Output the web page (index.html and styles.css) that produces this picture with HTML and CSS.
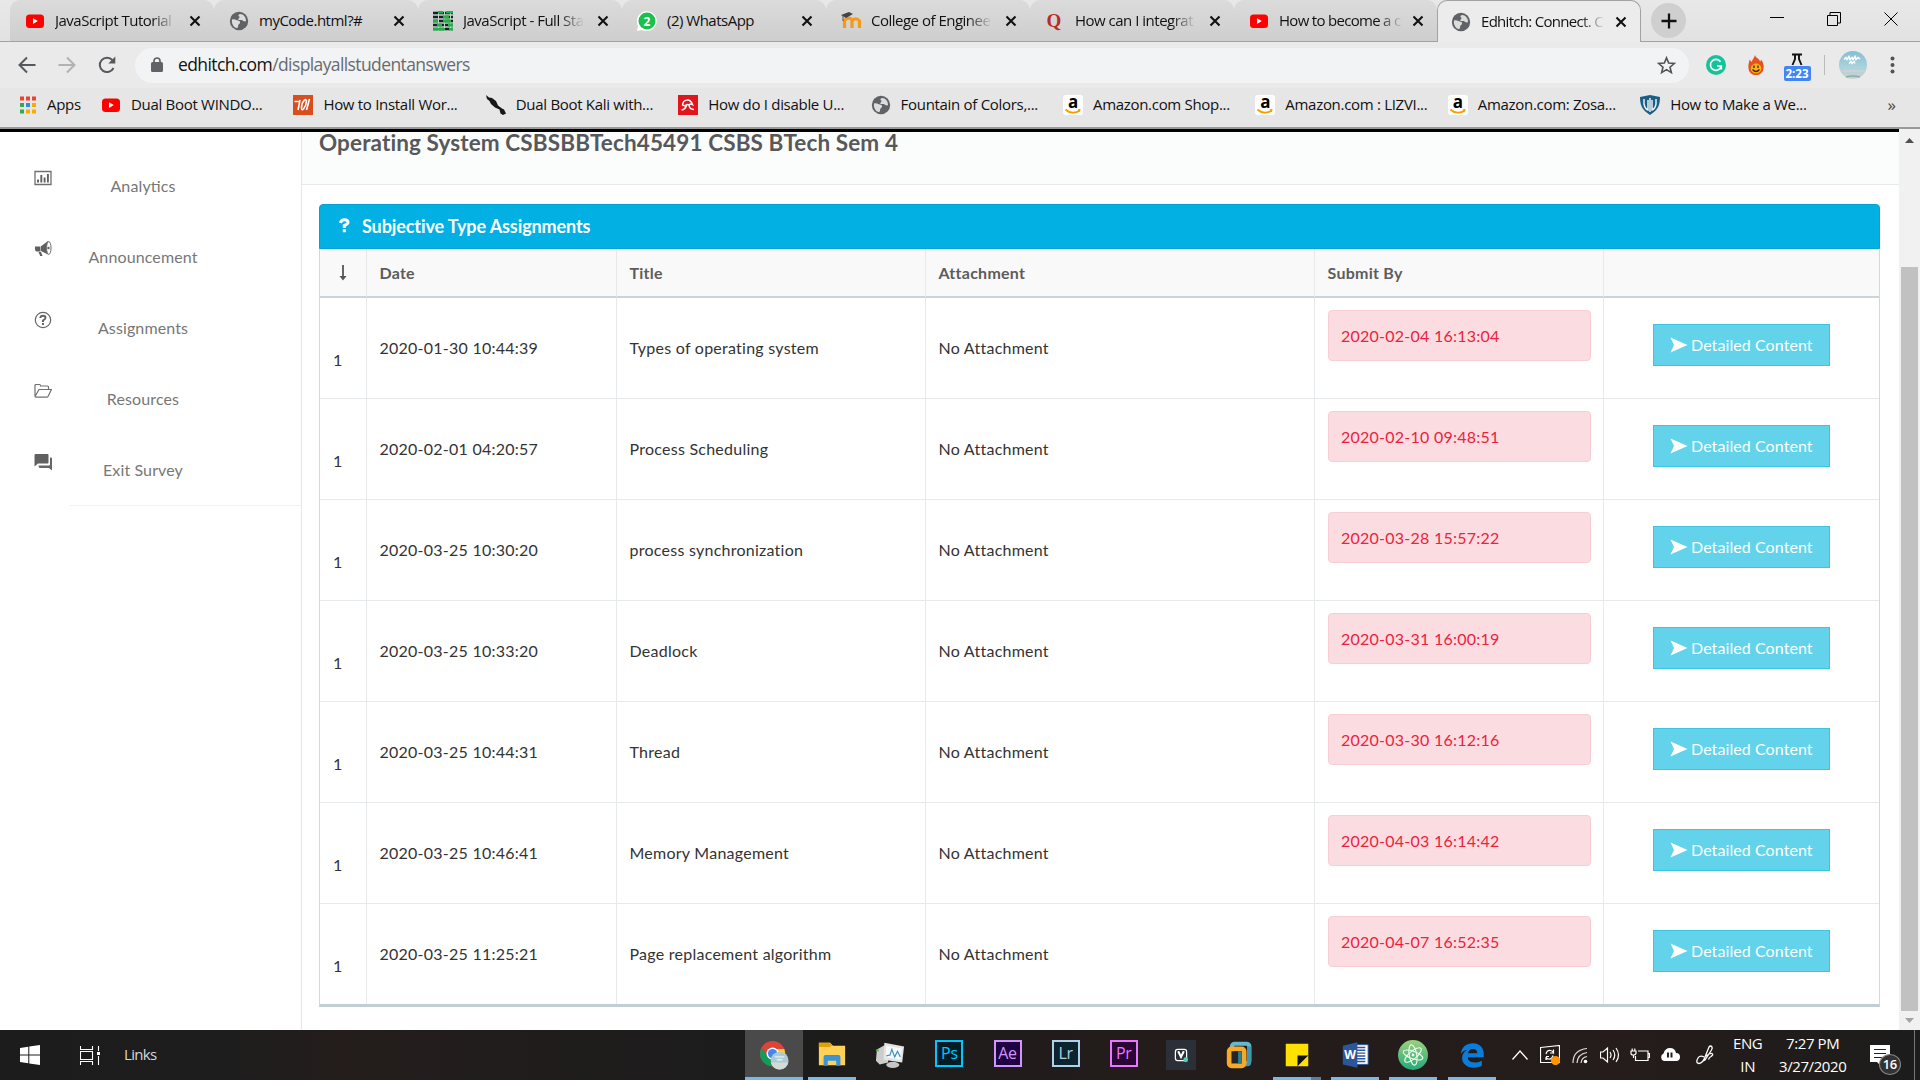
FILE: index.html
```html
<!DOCTYPE html>
<html lang="en">
<head>
<meta charset="utf-8">
<title>Edhitch: Connect.</title>
<link rel="stylesheet" href="styles.css">
</head>
<body>
<svg class="defs" aria-hidden="true">
  <symbol id="globe" viewBox="0 0 20 20"><circle cx="10" cy="10" r="9.2" fill="#5f6368"/><path d="M3 8.500C5.500 7.500 7 9 9 9.500c2 .5 2.500 1.500 1.800 2.800-.8 1-1.800 1.200-1.700 2.700 0 1-.5 1.800-1 2.300C4.500 16.500 2.300 12.500 3 8.500zM11 3c-1.800.5-2 2-.8 2.500.8.500.3 1.500-.6 1.900-.8.600-.2 1.600.8 1.700 1.400.1 2.500-.2 3.500.6 1 .7 2 .8 3.100.6C17.300 6.500 14.500 3 11 3z" fill="#dcdcdc"/></symbol>
  <symbol id="youtube" viewBox="0 0 20 20"><rect x="1" y="3.500" width="18" height="13.500" rx="3.500" fill="#f00"/><path d="M8 7.300v5.600l4.800-2.800z" fill="#fff"/></symbol>
  <symbol id="smile" viewBox="0 0 20 8"><path d="M2.500 1.500c4 4 10.500 4 14 1" fill="none" stroke="#f90" stroke-width="1.800"/><path d="M14.500 1.300l3.200-.3-.8 3.200z" fill="#f90"/></symbol>
  <symbol id="close" viewBox="0 0 12 12"><path d="M1.500 1.500l9 9M10.500 1.500l-9 9" stroke="#111" stroke-width="2.100"/></symbol>
  <symbol id="send" viewBox="0 0 18 16"><path d="M.5.5L17.500 8 .5 15.500 4 8z" fill="#fff"/></symbol>
</svg>

<header class="chrome">
  <div class="tabs">
    <div class="tab"><svg class="fav"><use href="#youtube"/></svg><span class="tab-title">JavaScript Tutorial</span><svg class="x"><use href="#close"/></svg></div>
    <div class="tab"><svg class="fav"><use href="#globe"/></svg><span class="tab-title plain">myCode.html?#</span><svg class="x"><use href="#close"/></svg></div>
    <div class="tab"><svg class="fav" viewBox="0 0 20 20"><path d="M0 0h20v20H0z" fill="#c9d4cc"/><path d="M0 2h20M0 6h20M0 10h20M0 14h20M0 18h20" stroke="#17202b" stroke-width="2.400" stroke-dasharray="5 1"/><path d="M5 0h5v2.500H5zM13 0h7v2.500h-7zM10 4.500h6v3h-6zM0 8.500h5v3H0zM10 8.500h8v3h-8zM4 12.500h5v3H4zM15 12.500h5v3h-5zM0 17h12v2.500H0zM16 17h4v2.500h-4z" fill="#23b04a"/></svg><span class="tab-title">JavaScript - Full Sta</span><svg class="x"><use href="#close"/></svg></div>
    <div class="tab"><svg class="fav" viewBox="0 0 20 20"><path d="M0 20l1-5A10 10 0 1 1 5 19z" fill="#fff"/><circle cx="10" cy="10" r="8.500" fill="#19c04c"/><text x="10" y="14.500" text-anchor="middle" class="glyph-2">2</text></svg><span class="tab-title plain">(2) WhatsApp</span><svg class="x"><use href="#close"/></svg></div>
    <div class="tab"><svg class="fav" viewBox="0 0 20 20"><path d="M3.500 17V9.500Q7.500 5 11 9v8M11 10q4-4.500 7.500 0v7" fill="none" stroke="#f39a1d" stroke-width="3.200"/><path d="M0 4l8-3 4 2-7 4z" fill="#444"/><path d="M2 4v6" stroke="#555"/></svg><span class="tab-title">College of Enginee</span><svg class="x"><use href="#close"/></svg></div>
    <div class="tab"><svg class="fav" viewBox="0 0 20 20"><text x="9" y="16" text-anchor="middle" class="glyph-q">Q</text></svg><span class="tab-title">How can I integrat</span><svg class="x"><use href="#close"/></svg></div>
    <div class="tab last"><svg class="fav"><use href="#youtube"/></svg><span class="tab-title tight">How to become a c</span><svg class="x"><use href="#close"/></svg></div>
    <div class="tab active"><svg class="fav"><use href="#globe"/></svg><span class="tab-title tight">Edhitch: Connect. C</span><svg class="x"><use href="#close"/></svg></div>
    <div class="plus"><svg width="16" height="16" viewBox="0 0 16 16"><path d="M8 .5v15M.5 8h15" stroke="#111" stroke-width="2.300"/></svg></div>
    <div class="win">
      <svg width="14" height="14" viewBox="0 0 14 14"><path d="M0 5.500h14" stroke="#000"/></svg>
      <svg width="14" height="14" viewBox="0 0 14 14"><path d="M.5 3.500h10v10H.5zM3 3V.5h10.500V11H11" fill="none" stroke="#000"/></svg>
      <svg width="14" height="14" viewBox="0 0 14 14"><path d="M.5.5l13 13M13.500.5l-13 13" stroke="#000"/></svg>
    </div>
  </div>

  <div class="toolbar">
    <svg class="nav" viewBox="0 0 18 18"><path d="M17.500 9H2M9 1.500L1.500 9 9 16.500" fill="none" stroke="#55585c" stroke-width="2"/></svg>
    <svg class="nav" viewBox="0 0 18 18"><path d="M.5 9H16M9 1.500L16.500 9 9 16.500" fill="none" stroke="#b0b2b4" stroke-width="2"/></svg>
    <svg class="nav" viewBox="0 0 18 18"><path d="M15.500 12A7.200 7.200 0 1 1 14.500 4.200" fill="none" stroke="#55585c" stroke-width="2"/><path d="M17.300.5v7h-7z" fill="#55585c"/></svg>
    <div class="omnibox">
      <svg width="12" height="16" viewBox="0 0 12 16"><rect y="5" width="12" height="10" rx="1.500" fill="#5f6368"/><path d="M3 6V4a3 3 0 0 1 6 0v2" fill="none" stroke="#5f6368" stroke-width="1.700"/></svg>
      <span class="url"><b>edhitch.com</b>/displayallstudentanswers</span>
      <svg class="star" width="19" height="19" viewBox="0 0 20 20"><path d="M10 2l2.300 5.400 5.900.5-4.500 3.900 1.400 5.700L10 14.400l-5.100 3.100 1.400-5.700L1.800 7.900l5.900-.5z" fill="none" stroke="#505357" stroke-width="1.700"/></svg>
    </div>
    <svg class="ext" viewBox="0 0 20 20"><circle cx="10" cy="10" r="10" fill="#15c39a"/><path d="M14.500 6.800A5.500 5.500 0 1 0 15.300 11H11M15.300 11v3.500" fill="none" stroke="#fff" stroke-width="1.700"/></svg>
    <svg class="ext" viewBox="0 0 20 20"><path d="M9 0c1 3.500 4 3 5 6.500 1-.5 1-2 1-2 2.500 3 3 6 2.500 9A7.500 7 0 0 1 2.500 13C2 9 3.500 7 3.500 4.500c1 1 1.500 2 2 2.500C6.500 4 8 3.500 9 0z" fill="#e8501c"/><ellipse cx="10" cy="13.500" rx="5.300" ry="5" fill="#f8b01b"/><path d="M8 10.500V13M12 10.500V13M6.500 14.500q3.500 4 7 0" fill="none" stroke="#462300" stroke-width="1.300"/></svg>
    <div class="timer"><svg width="12" height="13" viewBox="0 0 12 13"><path d="M1 1.500h10M4 1v5L1.500 12M8 1v5l2.500 6" stroke="#111" stroke-width="1.900" fill="none"/></svg><b>2:23</b></div>
    <i class="vsep"></i>
    <svg class="avatar" viewBox="0 0 28 28"><defs><linearGradient id="sky" x2="0" y2="1"><stop stop-color="#85bed3"/><stop offset=".6" stop-color="#acd3dd"/><stop offset="1" stop-color="#d2cfc8"/></linearGradient></defs><circle cx="14" cy="14" r="14" fill="url(#sky)"/><path d="M5 8.500l2-2 1 2 2-3 1 3 2-2 1 2 2-3 1 3 2-2 2 1.500M10 12.500l2-2 1 2 2-2 1 2" fill="none" stroke="#fff" stroke-width="1.500"/><path d="M3 20h22" stroke="#d9d6cc"/><path d="M7 26q7-2 14 0" fill="none" stroke="#7fb0b8" stroke-width="1.500"/></svg>
    <svg class="dots" width="5" height="18" viewBox="0 0 5 18"><g fill="#505357"><circle cx="2.500" cy="2.500" r="2"/><circle cx="2.500" cy="9" r="2"/><circle cx="2.500" cy="15.500" r="2"/></g></svg>
  </div>

  <nav class="bookmarks">
    <a class="apps"><svg class="fav" viewBox="0 0 20 20"><path d="M2 1.500h4v4H2zM8 1.500h4v4H8zM14 1.500h4v4h-4z" fill="#ea4335"/><path d="M2 8h4v4H2zM2 14.500h4v4H2z" fill="#34a853"/><path d="M8 8h4v4H8z" fill="#2b8cf0"/><path d="M14 8h4v4h-4zM8 14.500h4v4H8zM14 14.500h4v4h-4z" fill="#f9ab00"/></svg><span>Apps</span></a>
    <a><svg class="fav"><use href="#youtube"/></svg><span>Dual Boot WINDO...</span></a>
    <a><svg class="fav" viewBox="0 0 20 20"><path d="M0 0h20v20H0z" fill="#d84e1f"/><path d="M7 5L5 15M1.500 6.500H6M16.500 4l-3 11M11.500 5q-3 3-3 8 0 3 2 1 3-4 3-8-.5-2-2-1" fill="none" stroke="#fff" stroke-width="1.600"/></svg><span>How to Install Wor...</span></a>
    <a><svg class="fav" viewBox="0 0 20 20"><path d="M0 0l3 2.500 3 .5 4 3 2 4.500 4 3 2 1 2 4-3 1.500-2.500-1.500-1-4L9 12.500 5 9 3.500 6 1 4z" fill="#171717"/></svg><span>Dual Boot Kali with...</span></a>
    <a><svg class="fav" viewBox="0 0 20 20"><path d="M0 0h20v20H0z" fill="#e2151c"/><path d="M4.500 10.500C5 4 12 3 14.500 9.500q-2-1-3.500.5-2-1.500-4 1-1.300-1-2.500-.5M11 10q.5 4.500 5 4.500M9 9.500q-1.500 5-5.500 5.500" fill="none" stroke="#fff" stroke-width="1.500"/></svg><span>How do I disable U...</span></a>
    <a><svg class="fav"><use href="#globe"/></svg><span>Fountain of Colors,...</span></a>
    <a><span class="amazon">a<svg><use href="#smile"/></svg></span><span>Amazon.com Shop...</span></a>
    <a><span class="amazon">a<svg><use href="#smile"/></svg></span><span>Amazon.com : LIZVI...</span></a>
    <a><span class="amazon">a<svg><use href="#smile"/></svg></span><span>Amazon.com: Zosa...</span></a>
    <a><svg class="fav" viewBox="0 0 20 20"><path d="M0 2l10-2 10 2c0 8-2 13-10 18C2 15 0 10 0 2z" fill="#1b5e86"/><path d="M4 4v5q1 5 4 6V5M16 4v5q-1 5-4 6V5M10 3v14" fill="none" stroke="#e9f0f4" stroke-width="1.500"/></svg><span>How to Make a We...</span></a>
    <span class="more">»</span>
  </nav>
</header>

<div class="page">
  <aside class="side">
    <a><svg viewBox="0 0 18 18"><path d="M1 2.500h16v13H1z" fill="none" stroke="#707070" stroke-width="1.300"/><path d="M4 10.500v3M7.300 6v7.500M10.600 8.500v5M13.900 5v8.500" stroke="#606060" stroke-width="1.900"/></svg><span>Analytics</span></a>
    <a><svg viewBox="0 0 18 18"><path d="M1 6.500h5.500v5H2.500Q1 11 1 9zM7 6.300L14 1v13.500L7 11zM4.500 12h2.500l1.500 4H6.200z" fill="#606060"/><ellipse cx="14.800" cy="8" rx="2.200" ry="6.500" fill="#fff" stroke="#707070"/><circle cx="14.500" cy="8" r="1.200" fill="#606060"/></svg><span>Announcement</span></a>
    <a><svg viewBox="0 0 18 18"><circle cx="9" cy="9" r="7.700" fill="none" stroke="#686868" stroke-width="1.200"/><path d="M6.300 7Q6.500 4.700 9 4.700q2.500 0 2.500 2Q11.500 8 9 9.500V11M9 12v2" fill="none" stroke="#606060" stroke-width="1.900"/></svg><span>Assignments</span></a>
    <a><svg viewBox="0 0 18 18"><path d="M1 14V3.500q0-1 1-1h3.500q1 0 1 1.500h7q1 0 1 1v2.500M1 14.500l4-7h12.500l-3.500 7q-.3.700-1 .7H2q-1 0-1-1" fill="none" stroke="#707070" stroke-width="1.200"/></svg><span>Resources</span></a>
    <a><svg viewBox="0 0 18 18"><path d="M2 1h11.500q1 0 1 1v7.500q0 1-1 1H4L.5 13.500V2q0-1 1.500-1z" fill="#606060"/><path d="M16 4.500h1q1 0 1 1v12L15 15H6q-1.500 0-1.500-2.500H15q1 0 1-1z" fill="#666"/></svg><span>Exit Survey</span></a>
    <hr>
  </aside>

  <main class="main">
    <h1>Operating System CSBSBBTech45491 CSBS BTech Sem 4</h1>
    <section class="panel">
      <h2><svg width="11" height="15" viewBox="0 0 11 15"><path d="M1.500 5Q2 1.700 5.500 1.700 9 1.700 9 4.500 9 6 5.300 7.500V10M5.300 11.200v3" fill="none" stroke="#fff" stroke-width="3"/></svg><span>Subjective Type Assignments</span></h2>
      <table>
        <colgroup><col class="c1"><col class="c2"><col class="c3"><col class="c4"><col class="c5"><col></colgroup>
        <thead><tr><th class="sort"><svg width="8" height="16" viewBox="0 0 8 16"><path d="M4 0v14" stroke="#555" stroke-width="1.800"/><path d="M.5 11h7L4 15.500z" fill="#555"/></svg></th><th>Date</th><th>Title</th><th>Attachment</th><th>Submit By</th><th></th></tr></thead>
        <tbody>
          <tr><td class="num">1</td><td>2020-01-30 10:44:39</td><td>Types of operating system</td><td>No Attachment</td><td class="due"><div>2020-02-04 16:13:04</div></td><td class="act"><a><svg><use href="#send"/></svg>Detailed Content</a></td></tr>
          <tr><td class="num">1</td><td>2020-02-01 04:20:57</td><td>Process Scheduling</td><td>No Attachment</td><td class="due"><div>2020-02-10 09:48:51</div></td><td class="act"><a><svg><use href="#send"/></svg>Detailed Content</a></td></tr>
          <tr><td class="num">1</td><td>2020-03-25 10:30:20</td><td>process synchronization</td><td>No Attachment</td><td class="due"><div>2020-03-28 15:57:22</div></td><td class="act"><a><svg><use href="#send"/></svg>Detailed Content</a></td></tr>
          <tr><td class="num">1</td><td>2020-03-25 10:33:20</td><td>Deadlock</td><td>No Attachment</td><td class="due"><div>2020-03-31 16:00:19</div></td><td class="act"><a><svg><use href="#send"/></svg>Detailed Content</a></td></tr>
          <tr><td class="num">1</td><td>2020-03-25 10:44:31</td><td>Thread</td><td>No Attachment</td><td class="due"><div>2020-03-30 16:12:16</div></td><td class="act"><a><svg><use href="#send"/></svg>Detailed Content</a></td></tr>
          <tr><td class="num">1</td><td>2020-03-25 10:46:41</td><td>Memory Management</td><td>No Attachment</td><td class="due"><div>2020-04-03 16:14:42</div></td><td class="act"><a><svg><use href="#send"/></svg>Detailed Content</a></td></tr>
          <tr><td class="num">1</td><td>2020-03-25 11:25:21</td><td>Page replacement algorithm</td><td>No Attachment</td><td class="due"><div>2020-04-07 16:52:35</div></td><td class="act"><a><svg><use href="#send"/></svg>Detailed Content</a></td></tr>
        </tbody>
      </table>
    </section>
  </main>

  <div class="scroll">
    <svg width="9" height="5" viewBox="0 0 9 5"><path d="M0 5l4.500-5L9 5z" fill="#505050"/></svg>
    <i></i>
    <svg width="9" height="5" viewBox="0 0 9 5"><path d="M0 0l4.500 5L9 0z" fill="#a3a3a3"/></svg>
  </div>
</div>

<footer class="taskbar">
  <svg class="start" width="20" height="20" viewBox="0 0 20 20"><path d="M0 3l8.300-1.200v7.700H0zM9.300 1.600L20 0v9.500H9.300zM0 10.500h8.300v7.700L0 17zM9.300 10.500H20V20L9.300 18.400z" fill="#fff"/></svg>
  <svg class="view" width="21" height="19" viewBox="0 0 21 19"><path d="M.5 0v3.500h12V0M.5 5.500h12v8H.5zM.5 19v-3.500h12V19M18.500 0v5M18.500 10v9" fill="none" stroke="#fff" stroke-width="1.100"/><path d="M17 6h3v3h-3z" fill="#fff"/></svg>
  <span class="links">Links</span>
  <div class="programs">
    <div class="app on"><svg viewBox="0 0 32 32"><circle cx="14.500" cy="14.500" r="13.500" fill="#db4437"/><path d="M2.800 8A13.500 13.500 0 0 0 14 28l5-8.500L9 17z" fill="#0f9d58"/><path d="M28 14.500A13.500 13.500 0 0 1 14 28l6-10-2-8.500h9z" fill="#ffcd40"/><circle cx="14.500" cy="14.500" r="6.500" fill="#fff"/><circle cx="14.500" cy="14.500" r="5" fill="#4285f4"/><circle cx="22" cy="22" r="9.500" fill="#adcbd4"/><path d="M12.700 24h18.600a9.500 9.500 0 0 1-18.600 0z" fill="#d5d9d8"/><path d="M17 18h10M19 21h6" stroke="#e5f0f2" stroke-width="1.500"/></svg></div>
    <div class="app run"><svg viewBox="0 0 32 32"><path d="M2 3h12l3 3h13v21H2z" fill="#ffd257"/><path d="M2 3h12l2 3-3 1.500H2z" fill="#e1a100"/><path d="M7 27.500V18q0-2 2-2h14q2 0 2 2v9.500h-4.500V22h-9v5.500z" fill="#3b93d9"/></svg></div>
    <div class="app"><svg viewBox="0 0 32 32"><path d="M2 10l9-5 3 2v17l-9 2-4-4z" fill="#ccc"/><path d="M10 3l21 4-2 17-20-3z" fill="#e4e4e4"/><path d="M12 6l16.500 3-1.500 12-15.500-2.500z" fill="#f7fbff"/><path d="M12 17l4-1 2-6 3 8 3-6 3 6" fill="none" stroke="#3c92c5" stroke-width="1.300"/><ellipse cx="19" cy="26.500" rx="7" ry="3.300" fill="#c6c6c6"/><path d="M1 11h3" stroke="#4caf50" stroke-width="2"/></svg></div>
    <div class="app"><span class="adobe ps">Ps</span></div>
    <div class="app"><span class="adobe ae">Ae</span></div>
    <div class="app"><span class="adobe lr">Lr</span></div>
    <div class="app"><span class="adobe pr">Pr</span></div>
    <div class="app"><svg viewBox="0 0 32 32"><path d="M0 0h32v32H0z" fill="#2a2f38"/><rect x="10" y="10" width="12" height="12" rx="2.500" fill="none" stroke="#fff" stroke-width="1.300"/><path d="M13 12l3 6 3-6" fill="none" stroke="#fff" stroke-width="2.200"/><circle cx="21" cy="21" r="2.600" fill="#4fd1b3"/></svg></div>
    <div class="app"><svg viewBox="0 0 32 32"><rect x="8.500" y="4" width="18.500" height="21" rx="3" fill="none" stroke="#62b9d0" stroke-width="4.500"/><path d="M27 7v17q0 2-2 2h-3" fill="none" stroke="#3f97b0" stroke-width="4"/><rect x="5.500" y="9.500" width="16" height="18" rx="2.500" fill="none" stroke="#f7a928" stroke-width="5"/><path d="M8 12h11v13H8z" fill="#262626"/><path d="M15 12h4v13h-4z" fill="#2d7f96"/></svg></div>
    <div class="app run split"><svg viewBox="0 0 32 32"><path d="M4 4h24v24H4z" fill="#ffe100"/><path d="M16.500 16.500H28l-11.500 11.500z" fill="#111"/></svg></div>
    <div class="app run"><svg viewBox="0 0 32 32"><path d="M17 5h13v21H17z" fill="#fff" stroke="#2b579a"/><path d="M18 8h9M18 11h9M18 14h9M18 17h9M18 20h9M18 23h9" stroke="#2b579a" stroke-width="1.500"/><path d="M3 6l15.500-3.500v27L3 26z" fill="#2b579a"/><text x="10.800" y="20.500" text-anchor="middle" class="glyph-w">W</text></svg></div>
    <div class="app run"><svg viewBox="0 0 32 32"><defs><linearGradient id="ag" x2="0" y2="1"><stop stop-color="#9bd17b"/><stop offset="1" stop-color="#25a97b"/></linearGradient></defs><circle cx="16" cy="16" r="16" fill="url(#ag)"/><g fill="none" stroke="#eafaf0" stroke-width="1.200"><ellipse cx="16" cy="16" rx="11" ry="4" transform="rotate(20 16 16)"/><ellipse cx="16" cy="16" rx="11" ry="4" transform="rotate(80 16 16)"/><ellipse cx="16" cy="16" rx="11" ry="4" transform="rotate(140 16 16)"/></g><circle cx="16" cy="16" r="1.500" fill="#fff"/></svg></div>
    <div class="app run"><svg viewBox="0 0 32 32"><path d="M4 15C5 7 10.500 3.500 17 3.500c7 0 11.500 5 11.500 11v4h-17c0 4 3.500 5.500 7.500 5.500 3 0 5.500-.8 7.500-2v5.500c-2 1.200-5 2-8.500 2-8 0-12.500-4.500-12.500-10 0-4.500 2.500-7.500 6-9C7.500 11 5.500 12.500 4 15zm7.700-.8h10c0-3-1.700-4.700-4.700-4.700s-5 2-5.300 4.700z" fill="#0a7ddb"/></svg></div>
  </div>
  <div class="tray">
    <svg viewBox="0 0 20 20"><path d="M2.500 14.500L10 6l7.500 8.500" fill="none" stroke="#fff" stroke-width="1.300"/></svg>
    <svg viewBox="0 0 20 20"><path d="M.5 2.500L19.500.500v17H.5zM6 9q1-4 4.500-3.500 2 .3 3 2V4.500M13.500 8H10M13 10.500q-1 4-4.500 3.500-2-.3-2.500-2V15M6 11.500h3" fill="none" stroke="#fff" stroke-width="1.200"/><circle cx="15.500" cy="15.500" r="4.600" fill="#ff9500"/></svg>
    <svg viewBox="0 0 20 20"><g fill="none" stroke="#ddd" stroke-width="1.200"><path d="M3 18Q3 5 17 3.500M7 18Q7.500 9 17 7.500M11 18Q11.500 12.500 17 11.500"/></g><circle cx="15.500" cy="16.500" r="1.800" fill="#fff"/></svg>
    <svg viewBox="0 0 20 20"><path d="M.5 7H3l4.500-4v14L3 13H.5zM10 7q2 3 0 6M13 5q3.500 5 0 10M16 3q5 7 0 14" fill="none" stroke="#fff" stroke-width="1.200"/></svg>
    <svg viewBox="0 0 20 20"><path d="M8 6h10v9.500H5.500V11M18.500 8.500h1v4h-1M1 6h5v2.500Q5.500 10 3.500 10 1 10 1 8.500zM2.200 3.500V6M4.800 3.500V6M3.500 10v3" fill="none" stroke="#fff" stroke-width="1.200"/></svg>
    <svg viewBox="0 0 20 20"><path d="M4 16a4 4 0 0 1-.5-7.500Q5 3 10 3q5 0 6 5a4 4 0 0 1 0 8z" fill="#fff"/><path d="M8 7.500v5M11.500 7.500v5" stroke="#222" stroke-width="2"/></svg>
    <svg class="pen" viewBox="0 0 20 20"><path d="M9 12q-4-2-6 1-3 5 1 5.500Q8 18 10 12L14 2q1.500-2 3 0 .5 1.500-.5 3L10 15l-2 1M11 11q4-3 6-2.500 2 1-1 3-2 1-2.500 3" fill="none" stroke="#fff" stroke-width="1.300"/></svg>
    <div class="lang"><span>ENG</span><span>IN</span></div>
    <div class="clock"><span>7:27 PM</span><span>3/27/2020</span></div>
    <div class="note"><svg width="20" height="20" viewBox="0 0 20 20"><path d="M0 0h20v17h-7l-3 3-3-3H0z" fill="#fff"/><path d="M4 4.500h12M4 8.500h12M4 12.500h8" stroke="#222" stroke-width="1.200"/></svg><b>16</b></div>
  </div>
</footer>
</body>
</html>
```
FILE: styles.css
```css
* { box-sizing: border-box; }
body { margin: 0; width: 1920px; height: 1080px; overflow: hidden; display: flex; flex-direction: column; background: #fff; font-family: Lato, sans-serif; color: #333; }
svg { display: block; flex: none; }
.defs { position: absolute; width: 0; height: 0; }

/* browser chrome */
.chrome { height: 129px; flex: none; display: flex; flex-direction: column; font-family: "Open Sans", sans-serif; font-size: 15px; color: #111; background: #e8e8e8; }
.tabs { height: 42px; display: flex; padding-left: 10px; background: linear-gradient(#e8e8e8, #e2e2e2); border-bottom: 1px solid #a2a2a2; flex: none; }
.tab { width: 204px; height: 41px; flex: none; display: flex; align-items: center; padding: 0 13px 0 15px; background: linear-gradient(#dbdbdb, #cecece); border-radius: 10px 10px 0 0; position: relative; }
.tab::after { content: ""; position: absolute; right: -1px; top: 9px; width: 1px; height: 25px; background: #808080; }
.tab.last::after, .tab.active::after { display: none; }
.tab.last { width: 203px; }
.tab.active { height: 42px; background: #ececec; border: 1px solid #a2a2a2; border-bottom: 0; padding-left: 13px; padding-right: 13px; }
.tab-title { width: 121px; margin: -2px auto 0 10px; overflow: hidden; white-space: nowrap; letter-spacing: -.5px; -webkit-mask-image: linear-gradient(90deg, #000 80%, transparent); mask-image: linear-gradient(90deg, #000 80%, transparent); }
.tab-title.plain { -webkit-mask-image: none; mask-image: none; }
.tab-title.tight { width: 124px; letter-spacing: -.7px; }
.fav { width: 20px; height: 20px; }
.x { width: 12px; height: 12px; }
.plus { width: 35px; height: 35px; margin: 3px 0 0 10px; border-radius: 50%; background: #cfcfcf; display: grid; place-items: center; }
.win { margin-left: auto; display: flex; gap: 43px; padding: 12px 22px 0 0; }
.toolbar { height: 46px; flex: none; display: flex; align-items: center; padding: 0 25px 0 18px; background: #eaeaea; }
.nav { width: 18px; height: 18px; margin-right: 22px; }
.omnibox { width: 1554px; height: 35px; flex: none; margin-left: -3px; display: flex; align-items: center; padding: 0 13px 0 16px; border-radius: 18px; background: #f1f3f4; }
.url { margin: -2px 0 0 15px; font-size: 17.500px; letter-spacing: -.6px; color: #686b6f; }
.url b { font-weight: 400; color: #111; }
.star { margin-left: auto; }
.ext { width: 20px; height: 20px; margin-left: 17px; }
.ext + .ext { margin-left: 20px; }
.timer { margin: 4px 0 0 17px; width: 28px; display: flex; flex-direction: column; align-items: center; }
.timer b { width: 27px; height: 15px; border-radius: 2px; background: #4285f4; color: #fff; font-size: 11.500px; line-height: 15px; text-align: center; }
.vsep { width: 1px; height: 20px; margin: 0 14px 0 13px; background: #bcbcbc; }
.avatar { width: 28px; height: 28px; }
.dots { margin-left: auto; }
.bookmarks { flex: 1; display: flex; align-items: center; padding: 0 24px 5px 18px; background: #e6e6e6; border-bottom: 2px solid #999; }
.bookmarks a { width: 192.400px; flex: none; display: flex; align-items: center; gap: 10px; letter-spacing: -.3px; white-space: nowrap; }
.bookmarks a > span:last-child { margin-top: -2px; }
.bookmarks a.apps { width: 83px; gap: 9px; }
.amazon { width: 20px; height: 20px; border-radius: 3px; background: #fff; font-weight: 700; font-size: 17px; line-height: 13px; color: #000; text-align: center; }
.amazon svg { width: 20px; height: 8px; }
.more { margin-left: auto; margin-top: -2px; font-size: 17px; color: #444; }
.glyph-2 { font: 700 12px "Open Sans", sans-serif; fill: #fff; }
.glyph-q { font: 700 19px "Liberation Serif", serif; fill: #b92b27; }
.glyph-w { font: 700 13px "Open Sans", sans-serif; fill: #fff; }

/* web page */
.page { flex: 1; display: flex; min-height: 0; }
.side { width: 301px; border-top: 3px solid #000; padding-top: 10px; display: flex; flex-direction: column; }
.side a { height: 71px; display: flex; align-items: center; font-size: 16px; color: #777; flex: none; }
.side svg { width: 18px; height: 18px; margin: 0 0 0 34px; }
.side span { width: 182px; text-align: center; margin-top: 16px; letter-spacing: .12px; font-feature-settings: "liga" 1; }
.side hr { width: 231px; height: 1px; border: 0; margin: 8px 0 0 auto; background: #f0f2f2; }
.main { width: 1598px; border-top: 3px solid #000; box-shadow: inset 1px 0 #e3e8e8; }
h1 { margin: 0 0 0 1px; height: 53px; padding: 0 17px; background: #fbfdfc; border-bottom: 1px solid #e6eaea; font-size: 22.500px; line-height: 22px; font-weight: 700; letter-spacing: .12px; color: #58585b; white-space: nowrap; }
.side, .main { flex: none; }
.panel { margin: 19px 19px 0 18px; width: 1561px; }
h2 { margin: 0; height: 45px; display: flex; align-items: center; padding: 0 0 2px 19px; gap: 12px; background: #02b0e3; border: 1px solid #02a2d2; border-radius: 4px 4px 0 0; color: #fff; font-size: 18px; font-weight: 700; letter-spacing: -.1px; }
table { width: 1561px; table-layout: fixed; border-collapse: separate; border-spacing: 0; border: 1px solid #cfdadd; border-top: 0; border-bottom: 3px solid #c1ced3; font-size: 16px; letter-spacing: .25px; }
.c1 { width: 47px; } .c2 { width: 250px; } .c3 { width: 309px; } .c4 { width: 389px; } .c5 { width: 289px; }
th { height: 49px; padding: 0 12px 0 12.500px; text-align: left; background: #f9f9f9; color: #5c5c5c; border-right: 1px solid #e7eaec; border-bottom: 2px solid #cbd5d9; }
td { height: 101px; padding: 0 12px 2px 12.500px; border-right: 1px solid #e7eaec; border-bottom: 1px solid #e7eaec; }
th:last-child, td:last-child { border-right: 0; }
tbody tr:last-child td { border-bottom: 0; height: 100px; }
.sort { padding-left: 19px; }
.num { padding: 23px 0 0 13px; }
.due { vertical-align: top; padding: 12px 12px 0 13px; }
.due div { height: 51px; padding-left: 12px; line-height: 50px; border: 1px solid #f8cdd3; border-radius: 4px; background: #fbdde1; color: #ed2140; }
.act { vertical-align: top; padding: 26px 0 0 49px; }
.act a { width: 177px; height: 42px; display: flex; align-items: center; gap: 3px; padding: 0 0 1px 16px; background: #62d3ea; border: 1px solid #3cc4e0; color: #fff; letter-spacing: .08px; white-space: nowrap; }
.act svg { width: 18px; height: 16px; }
.scroll { width: 21px; background: #f1f1f1; display: flex; flex-direction: column; align-items: center; padding: 9px 0 7px; }
.scroll i { width: 17px; height: 744px; margin: 124px 0 auto; background: #c1c1c1; }

/* taskbar */
.taskbar { height: 50px; flex: none; display: flex; align-items: center; background: linear-gradient(90deg, #1c1c1c, #1e1d1d 12%, #241d1c 18%, #1c1c1c 40%, #231c1b 60%, #251c1b 85%, #1c1c1c); color: #fff; font-family: "Open Sans", sans-serif; }
.start { margin-left: 20px; }
.view { margin-left: 40px; }
.links { margin: -2px 0 0 23px; width: 621px; flex: none; font-size: 15px; letter-spacing: -.7px; color: #d8d8d8; }
.programs { display: flex; flex: none; }
.app { width: 58.100px; height: 50px; display: flex; align-items: center; justify-content: center; }
.app svg { width: 30px; height: 30px; }
.app.on { background: #4a4a4a; border-bottom: 3px solid #76b9ed; padding-top: 3px; }
.app.run { width: 48px; margin: 0 5.100px; border-bottom: 3px solid #76b9ed; padding-top: 3px; }
.app.split { border-style: solid; border-width: 0 0 3px; border-image: linear-gradient(90deg, #76b9ed 76%, #5380a4 76%) 3; }
.adobe { width: 28px; height: 27px; border: 2px solid; font-size: 16px; line-height: 22px; text-align: center; letter-spacing: -.3px; margin: -3px 0 0 2px; }
.ps { color: #00c8ff; background: #001d26; }
.ae { color: #cf96fd; background: #1f0040; }
.lr { color: #aed3e6; background: #0d2430; }
.pr { color: #e878ff; background: #2a0634; }
.tray { flex: 1; display: flex; align-items: center; font-size: 15px; letter-spacing: -.4px; padding-left: 9px; }
.tray > svg { width: 20px; height: 20px; margin-right: 10px; }
.tray .pen { margin: 0 0 0 5px; }
.lang, .clock { display: flex; flex-direction: column; align-items: center; line-height: 23px; flex: none; margin-top: -1px; }
.lang { width: 32px; margin-left: 17px; }
.clock { width: 74px; margin-left: 12px; }
.note { margin-left: 20px; width: 45px; flex: none; height: 50px; padding-top: 15px; border-right: 1px solid #777; position: relative; }
.note b { position: absolute; left: 9px; top: 24px; width: 22px; height: 21px; border-radius: 50%; border: 1px solid #888; background: #333; font-size: 13px; line-height: 19px; text-align: center; font-weight: 600; }
```
